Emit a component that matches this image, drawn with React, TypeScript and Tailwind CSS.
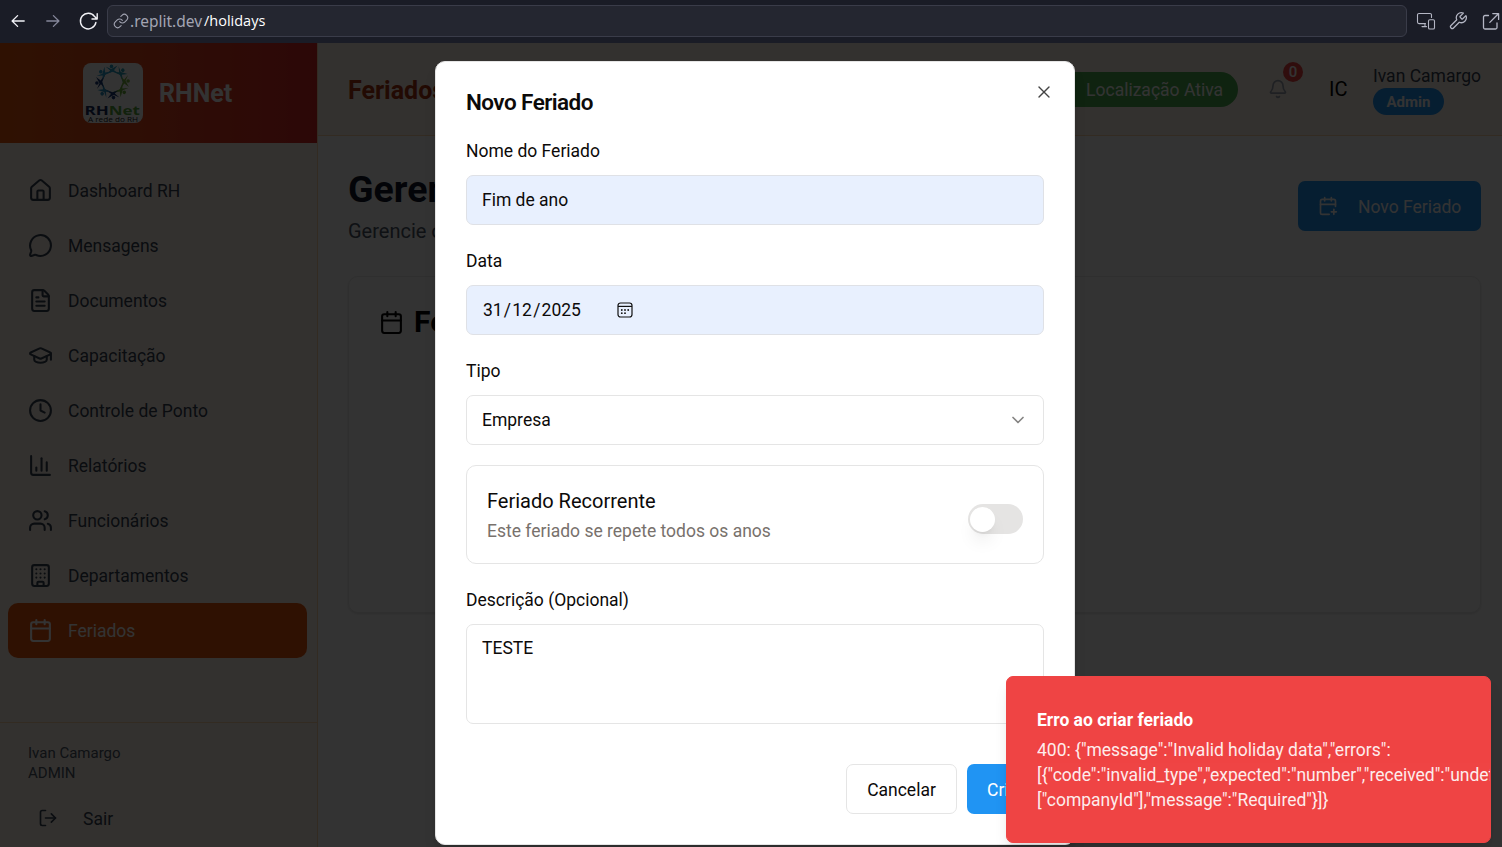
import {
  House, MessageCircle, FileText, GraduationCap, Clock, ChartColumn, Users, Building, Calendar,
  LogOut, Bell, CalendarPlus, X, ChevronDown,
} from "lucide-react";

const navItems = [
  { label: "Dashboard RH", Icon: House },
  { label: "Mensagens", Icon: MessageCircle },
  { label: "Documentos", Icon: FileText },
  { label: "Capacitação", Icon: GraduationCap },
  { label: "Controle de Ponto", Icon: Clock },
  { label: "Relatórios", Icon: ChartColumn },
  { label: "Funcionários", Icon: Users },
  { label: "Departamentos", Icon: Building },
  { label: "Feriados", Icon: Calendar, active: true },
];

const people = ["#2a9fc8", "#2a9fb8", "#7bb342", "#6cae3e", "#1d3b7a", "#2a8fc0", "#1d3b7a", "#2a9fd0"];

function Logo() {
  return (
    <svg viewBox="0 0 60 60" className="h-[60px] w-[60px] rounded-lg bg-white">
      {people.map((c, i) => (
        <g key={i} transform={`rotate(${i * 45} 29.500 19)`} fill={c}>
          <circle cx="28.500" cy="3.400" r="1.800" />
          <path d="M22.500 3.400 L28.200 6 L34.500 2.600 L31 7.200 L39 12.600 L29.500 8.700 L24 10.400 L27.200 7.400 Z" />
        </g>
      ))}
      <text x="1.500" y="51.500" fontSize="12.500" fontWeight="700" textLength="55.500" lengthAdjust="spacingAndGlyphs" fontFamily="Open Sans, sans-serif" fill="#14285a">
        RH<tspan fill="#58a63c">Net</tspan>
      </text>
      <text x="5" y="58.600" fontSize="6.500" textLength="50" lengthAdjust="spacingAndGlyphs" fontFamily="Open Sans, sans-serif" fill="#222">
        A rede do RH
      </text>
    </svg>
  );
}

function BrowserBar() {
  const stroke = { fill: "none", stroke: "currentColor", strokeLinecap: "round", strokeLinejoin: "round" } as const;
  return (
    <div className="flex h-[43px] shrink-0 items-center bg-[#1a1c26] pb-[2px] text-[#b4b6c4]">
      <svg viewBox="0 0 20 20" className="ml-[8px] h-5 w-5 text-[#f2f2f7]" {...stroke} strokeWidth="1.3">
        <path d="M16.2 10H4.2M9.6 4.6 4.1 10l5.5 5.4" />
      </svg>
      <svg viewBox="0 0 20 20" className="ml-[15px] h-5 w-5 text-[#85879a]" {...stroke} strokeWidth="1.3">
        <path d="M3.8 10h12M10.4 4.6 15.9 10l-5.5 5.4" />
      </svg>
      <svg viewBox="0 0 20 20" className="ml-[15px] h-5 w-5 text-[#f2f2f7]" {...stroke} strokeWidth="1.4">
        <path d="M17.9 11.4A7.8 7.8 0 1 1 16.6 5.6L19 8M19.2 2.8V8h-5.2" />
      </svg>
      <div className="ml-[9px] flex h-8 w-[1300px] items-center rounded-md border border-[#3a3c49] bg-[#242630] pl-[5px] text-[15px]">
        <svg viewBox="0 0 24 24" className="h-4 w-4 text-[#a2a4b2]" {...stroke} strokeWidth="1.600">
          <path d="M10 13a5 5 0 0 0 7.54.54l3-3a5 5 0 0 0-7.07-7.07l-1.720 1.710" />
          <path d="M14 11a5 5 0 0 0-7.540-.540l-3 3a5 5 0 0 0 7.070 7.070l1.710-1.710" />
        </svg>
        <span className="mt-[2px] ml-[1px] w-[74px] whitespace-nowrap font-['Noto_Sans',sans-serif] text-[15.500px] text-[#a2a4b2]">.replit.dev</span>
        <span className="font-['Open_Sans','Noto_Sans',sans-serif] text-[14.500px] text-white">/holidays</span>
      </div>
      <svg viewBox="0 0 20 20" className="ml-[9px] h-5 w-5" {...stroke} strokeWidth="1.1">
        <path d="M9.5 12.6H3A1.5 1.5 0 0 1 1.500 11.100V4A1.500 1.500 0 0 1 3 2.500h11A1.500 1.500 0 0 1 15.500 4v2.500M9 12.600v3M6 15.600h4.500" />
        <rect x="12.500" y="8.700" width="6" height="9.300" rx="1.300" />
      </svg>
      <svg viewBox="0 0 24 24" className="ml-[12px] h-5 w-5" {...stroke} strokeWidth="1.5">
        <path d="M14.700 6.300a1 1 0 0 0 0 1.400l1.600 1.600a1 1 0 0 0 1.400 0l3.770-3.770a6 6 0 0 1-7.940 7.940l-6.910 6.910a2.120 2.120 0 0 1-3-3l6.910-6.910a6 6 0 0 1 7.940-7.940l-3.760 3.760z" />
      </svg>
      <svg viewBox="0 0 20 20" className="ml-[12.500px] h-5 w-5 shrink-0" {...stroke} strokeWidth="1.3">
        <path d="M7.500 4.500H4A1.500 1.500 0 0 0 2.500 6v10.500A1.500 1.500 0 0 0 4 18h10.500a1.500 1.500 0 0 0 1.500-1.500V12M11.800 2.600h5.800v5.800M17.400 2.800 8.800 11.400" />
      </svg>
    </div>
  );
}

function Sidebar() {
  return (
    <aside className="flex w-[318px] shrink-0 flex-col border-r border-orange-200 bg-[#fff5eb]">
      <div className="flex h-[100px] shrink-0 items-center bg-gradient-to-r from-[#ea580c] to-[#dc2626] pl-[83px]">
        <Logo />
        <span className="mt-[2px] ml-4 text-[25px] font-bold text-white">RHNet</span>
      </div>
      <nav className="flex flex-col pt-5 pr-[10px] pl-2">
        {navItems.map(({ label, Icon, active }) => (
          <div
            key={label}
            className={`flex h-[55px] items-center gap-[15px] rounded-[10px] pl-5 text-[17.500px] ${active ? "bg-[#ea580c] text-white" : "text-gray-700"}`}
          >
            <Icon size={25} />
            <span className="pt-[2px]">{label}</span>
          </div>
        ))}
      </nav>
      <div className="mt-auto h-[125px] border-t border-orange-200 pt-5 pl-7 text-gray-600">
        <div className="text-[15px] leading-5">Ivan Camargo</div>
        <div className="text-[15px] leading-5">ADMIN</div>
        <div className="mt-[22px] flex h-[25px] items-center gap-[25px] pl-[10px] text-[17.500px] text-gray-700">
          <LogOut size={20} />
          <span className="pt-[3px]">Sair</span>
        </div>
      </div>
    </aside>
  );
}

function Page() {
  return (
    <div className="flex min-w-0 flex-1 flex-col bg-white">
      <header className="flex h-[93px] shrink-0 items-center border-b border-orange-200 bg-[#fff5eb] pl-[30px] pr-[21px]">
        <h1 className="pt-[3px] text-[25px] font-bold text-[#ac3410]">Feriados</h1>
        <div className="ml-auto flex h-[35px] w-[190px] items-center justify-end rounded-full bg-[#4caf50] pt-[2px] pr-[15px] text-[17.500px] text-white">
          Localização Ativa
        </div>
        <div className="relative ml-[30px] mr-[41px] text-gray-400">
          <Bell size={20} />
          <span className="absolute -top-[17px] left-[15px] flex h-5 w-5 items-center justify-center rounded-full bg-[#ef4444] text-[15px] font-medium text-white">0</span>
        </div>
        <span className="w-[44px] text-[20px] text-black">IC</span>
        <div className="flex flex-col items-start">
          <span className="h-[25px] pt-[1px] text-[17.500px] leading-[25px] text-gray-700">Ivan Camargo</span>
          <span className="flex h-[27px] items-center rounded-full bg-[#2094f3] px-[13.500px] pt-[1px] text-[15px] font-bold text-white">Admin</span>
        </div>
      </header>
      <main className="flex-1 pl-[30px] pr-[21px] pt-[29px]">
        <div className="flex h-[81px] items-center justify-between">
          <div>
            <h2 className="pt-[1px] text-[37.500px] leading-[45px] font-bold text-gray-900">Gerenciar Feriados</h2>
            <p className="mt-[4px] text-[20px] leading-[30px] text-gray-600">Gerencie os feriados da empresa</p>
          </div>
          <div className="flex h-[50px] w-[183px] items-center rounded-[7px] bg-[#2094f3] pl-5 text-[17.500px] text-white">
            <CalendarPlus size={20} />
            <span className="ml-5 pt-[3px]">Novo Feriado</span>
          </div>
        </div>
        <div className="mt-[30px] h-[337px] rounded-[10px] border border-[#e8e8e8] px-[30px] pt-[30px] shadow-sm">
          <div className="flex items-center gap-[10px] text-[30px] leading-[30px] font-bold text-black">
            <Calendar size={25} />
            Feriados Cadastrados
          </div>
        </div>
      </main>
    </div>
  );
}

function Label({ children }: { children: string }) {
  return <div className="mb-[11px] h-[25px] text-[17.500px] leading-[25px]">{children}</div>;
}

function DatePickerIcon() {
  return (
    <svg viewBox="0 0 16 16" className="ml-[34.500px] h-4 w-4" fill="none" stroke="#111" strokeWidth="1.200">
      <rect x="1" y="1" width="14" height="14" rx="2.500" />
      <path d="M1 4.400h14" />
      <g fill="#111" stroke="none">
        <circle cx="4.800" cy="8" r=".9" /><circle cx="8" cy="8" r=".9" /><circle cx="11.200" cy="8" r=".9" />
        <circle cx="4.800" cy="11.200" r=".9" /><circle cx="8" cy="11.200" r=".9" />
      </g>
    </svg>
  );
}

function Dialog() {
  return (
    <div className="absolute top-[61px] left-[435px] flex h-[784px] w-[640px] flex-col rounded-[10px] border border-[#e5e5e5] bg-white px-[30px] pt-[30px] text-[17.500px] text-[#0c0a09] shadow-lg">
      <X size={20} strokeWidth={1.600} className="absolute top-[20px] right-[20px] text-[#444]" />
      <div className="mb-[27px] h-5 text-[22.500px] leading-5 font-semibold tracking-tight">Novo Feriado</div>
      <Label>Nome do Feriado</Label>
      <div className="mb-6 flex h-[50px] items-center rounded-[7px] border border-[#dfe1e6] bg-[#e8f0fe] px-[15px]">Fim de ano</div>
      <Label>Data</Label>
      <div className="mb-6 flex h-[50px] items-center rounded-[7px] border border-[#dfe1e6] bg-[#e8f0fe] px-4">
        <span className="w-[99px] whitespace-nowrap">31<span className="px-[1.200px]">/</span>12<span className="px-[1.200px]">/</span>2025</span>
        <DatePickerIcon />
      </div>
      <Label>Tipo</Label>
      <div className="mb-5 flex h-[50px] items-center justify-between rounded-[7px] border border-[#e5e5e5] px-[15px]">
        Empresa
        <ChevronDown size={20} className="text-[#858483]" />
      </div>
      <div className="mb-6 flex h-[99px] items-center justify-between rounded-[10px] border border-[#e5e5e5] px-5">
        <div>
          <div className="text-[20px] leading-[30px]">Feriado Recorrente</div>
          <div className="mt-[3px] leading-[25px] text-[#78716c]">Este feriado se repete todos os anos</div>
        </div>
        <div className="mt-[8px] flex h-[30px] w-[55px] items-center rounded-full bg-[#e5e4e3] pt-[1px] pl-[2px]">
          <div className="h-[25px] w-[25px] rounded-full bg-white shadow-[0_12px_18px_-4px_rgba(0,0,0,0.1),0_5px_7px_-5px_rgba(0,0,0,0.1)]" />
        </div>
      </div>
      <Label>Descrição (Opcional)</Label>
      <div className="h-[100px] rounded-[7px] border border-[#e5e5e5] px-[15px] pt-[11px] leading-[25px]">TESTE</div>
      <div className="mt-10 flex justify-end gap-[10px]">
        <div className="flex h-[50px] w-[111px] items-center justify-center rounded-[7px] border border-[#e5e5e5] pt-[2px]">Cancelar</div>
        <div className="flex h-[50px] w-[77px] items-center rounded-[7px] bg-[#2094f3] pt-[2px] pl-5 text-white">Criar</div>
      </div>
    </div>
  );
}

function Toast() {
  return (
    <div className="absolute top-[676px] left-[1006px] h-[167px] w-[485px] overflow-hidden rounded-[7px] border border-[#ef4444] bg-[#ef4444] px-[30px] pt-[31px] text-[17.500px] leading-[25px] whitespace-nowrap text-white shadow-lg">
      <div className="mb-[5px] font-bold">Erro ao criar feriado</div>
      <div className="opacity-90">
        <div>{'400: {"message":"Invalid holiday data","errors":'}</div>
        <div>{'[{"code":"invalid_type","expected":"number","received":"undefined","path":'}</div>
        <div>{'["companyId"],"message":"Required"}]}'}</div>
      </div>
    </div>
  );
}

export default function App() {
  return (
    <div className="relative flex h-[847px] w-[1502px] flex-col overflow-hidden font-[Roboto,sans-serif]">
      <BrowserBar />
      <div className="flex min-h-0 flex-1">
        <Sidebar />
        <Page />
      </div>
      <div className="absolute inset-x-0 top-[43px] bottom-0 bg-black/80" />
      <Dialog />
      <Toast />
    </div>
  );
}
